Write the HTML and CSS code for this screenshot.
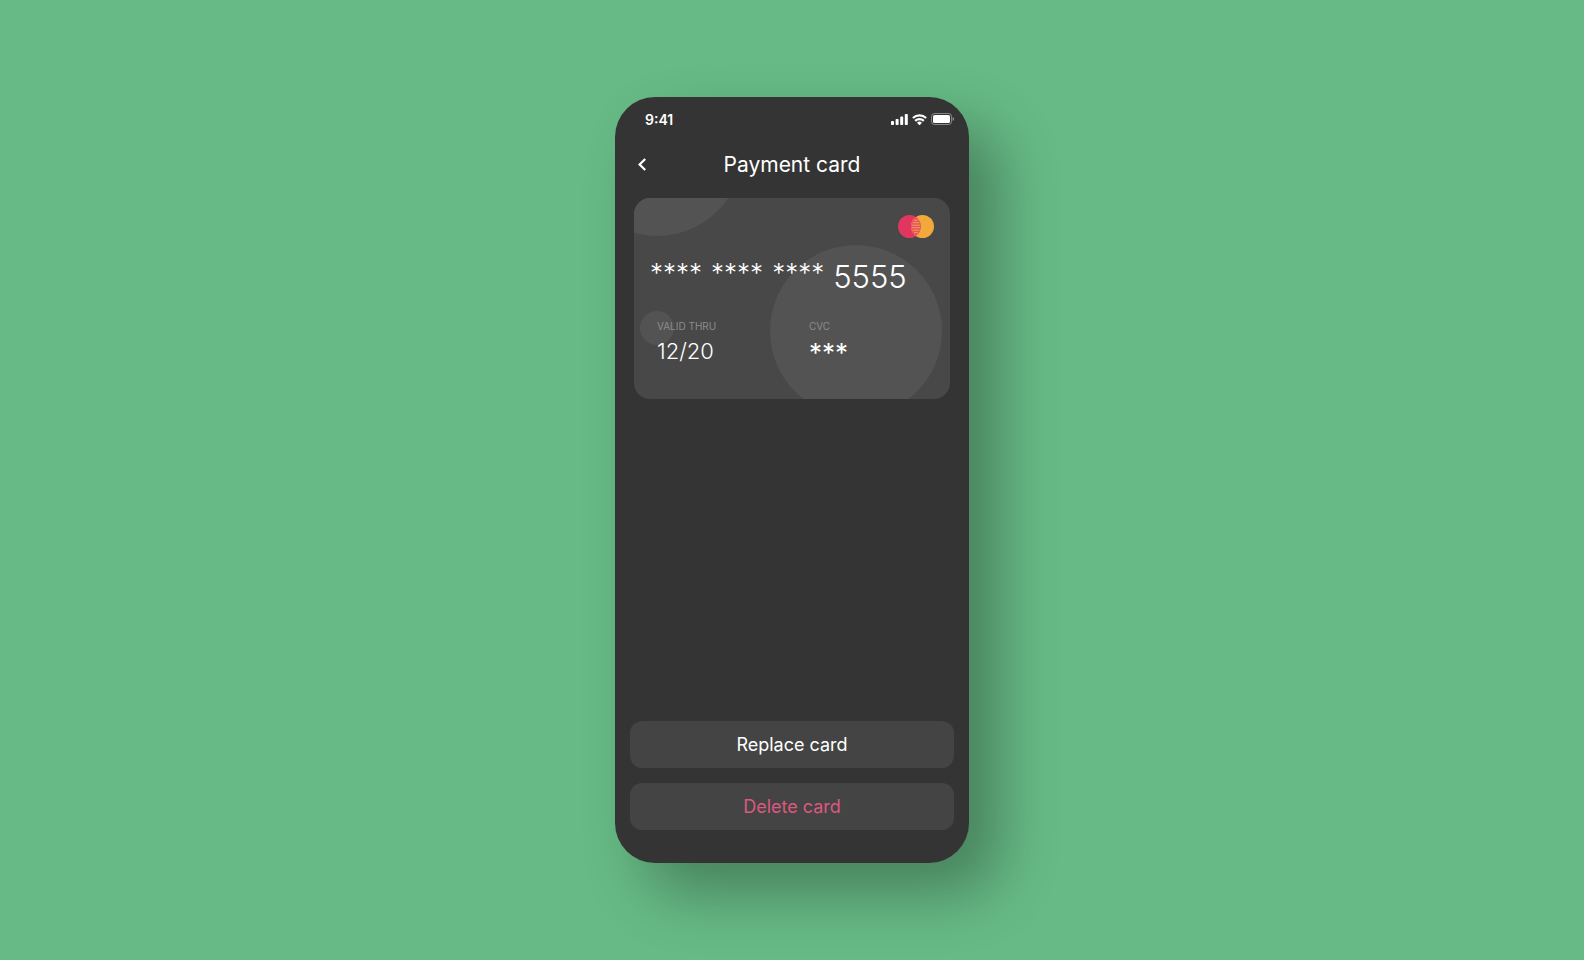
FILE: index.html
```html
<!DOCTYPE html>
<html lang="en">
<head>
    <meta charset="UTF-8">
    <meta name="viewport" content="width=device-width, initial-scale=1.0">
    <title>Payment card</title>
    <link rel="stylesheet" href="styles.css">
</head>
<body>
    <main class="phone">
        <div class="status-bar">
            <span class="time">9:41</span>
            <div class="status-icons">
                <svg width="17" height="11" viewBox="0 0 17 11" fill="#fff">
                    <rect x="0" y="7" width="3" height="4" rx="0.8"/>
                    <rect x="4.6" y="5" width="3" height="6" rx="0.8"/>
                    <rect x="9.2" y="2.6" width="3" height="8.4" rx="0.8"/>
                    <rect x="13.8" y="0" width="3" height="11" rx="0.8"/>
                </svg>
                <svg width="15" height="11" viewBox="0 0 15 11" fill="none" stroke="#fff" stroke-width="2.2">
                    <path d="M0.9 4A9.6 9.6 0 0 1 14.1 4"/>
                    <path d="M3.2 6.9A6.2 6.2 0 0 1 11.8 6.9"/>
                    <path d="M7.5 11.4L5 8.8A3.6 3.6 0 0 1 10 8.8Z" fill="#fff" stroke="none"/>
                </svg>
                <svg width="23" height="12" viewBox="0 0 23 12">
                    <rect x="0.5" y="0.5" width="20" height="11" rx="3" fill="none" stroke="#fff" stroke-opacity="0.4"/>
                    <rect x="2" y="2" width="17" height="8" rx="1.6" fill="#fff"/>
                    <path d="M21.6 4V8A2.1 2.1 0 0 0 21.6 4Z" fill="#fff" fill-opacity="0.45"/>
                </svg>
            </div>
        </div>

        <header class="header">
            <button class="back" aria-label="Back">
                <svg width="8" height="13" viewBox="0 0 8 13" fill="none" stroke="#fff" stroke-width="2.2">
                    <path d="M7.2 1L1.6 6.5L7.2 12"/>
                </svg>
            </button>
            <h1>Payment card</h1>
        </header>

        <section class="card">
            <svg class="card-circles" viewBox="0 0 316 201" preserveAspectRatio="none">
                <circle cx="23" cy="-48" r="86"/>
                <circle cx="222" cy="133" r="86"/>
                <circle cx="23" cy="130" r="17"/>
            </svg>
            <svg class="card-logo" width="36" height="23" viewBox="0 0 36 23">
                <circle cx="11.5" cy="11.5" r="11.5" fill="#e0365f"/>
                <circle cx="24.5" cy="11.5" r="11.5" fill="#f2a93b"/>
                <path d="M18 2A11.5 11.5 0 0 1 18 21A11.5 11.5 0 0 1 18 2Z" fill="#e8505a"/>
                <path d="M16 5.2H20M14.6 7.7H21.4M13.8 10.2H22.2M13.8 12.7H22.2M14.6 15.2H21.4M16 17.7H20" stroke="#f2a05a" stroke-width="1"/>
            </svg>
            <div class="card-number">
                <span class="stars">****</span>
                <span class="stars">****</span>
                <span class="stars">****</span>
                <span class="digits">5555</span>
            </div>
            <dl class="card-info">
                <div>
                    <dt>VALID THRU</dt>
                    <dd>12/20</dd>
                </div>
                <div>
                    <dt>CVC</dt>
                    <dd class="stars">***</dd>
                </div>
            </dl>
        </section>

        <div class="actions">
            <button class="btn">Replace card</button>
            <button class="btn btn-delete">Delete card</button>
        </div>
    </main>
</body>
</html>
```
FILE: styles.css
```css
* {
    box-sizing: border-box;
}
body {
    margin: 0;
    min-height: 100vh;
    display: flex;
    align-items: center;
    justify-content: center;
    background-color: #67ba85;
    font-family: Inter, sans-serif;
    color: #fff;
}
.phone {
    display: flex;
    flex-direction: column;
    width: 100%;
    max-width: 354px;
    min-height: 766px;
    padding: 12px 15px 33px;
    border-radius: 40px;
    background: #343434;
    box-shadow: 30px 30px 60px rgba(0, 0, 0, 0.3);
}
.status-bar {
    display: flex;
    align-items: center;
    justify-content: space-between;
    height: 20px;
    padding-left: 15px;
}
.time {
    font-size: 14px;
    font-weight: 600;
}
.status-icons {
    display: flex;
    align-items: center;
    gap: 4px;
}
.header {
    display: grid;
    grid-template-columns: 24px 1fr 24px;
    align-items: center;
    margin-top: 20px;
    height: 30px;
}
.header h1 {
    margin: 0;
    font-size: 21px;
    font-weight: 400;
    text-align: center;
}
.back {
    display: flex;
    padding: 4px 8px;
    border: none;
    background: none;
    cursor: pointer;
}
.card {
    position: relative;
    display: flex;
    flex-direction: column;
    height: 201px;
    margin: 19px 4px 0;
    padding: 17px 16px;
    border-radius: 16px;
    background: #484848;
    overflow: hidden;
}
.card-circles {
    position: absolute;
    inset: 0;
    width: 100%;
    height: 100%;
    fill: #535353;
}
.card-logo,
.card-number,
.card-info {
    position: relative;
}
.card-logo {
    align-self: flex-end;
}
.card-number {
    display: flex;
    gap: 9px;
    height: 38px;
    margin-top: 20px;
    font-weight: 300;
    line-height: 38px;
}
.card .stars {
    font-size: 26px;
}
.card-number .stars {
    line-height: 30px;
}
.digits {
    font-size: 31px;
}
.card-info {
    display: grid;
    grid-template-columns: 152px 1fr;
    margin: 22px 0 0;
    padding-left: 7px;
}
.card-info dt {
    font-size: 10px;
    line-height: 16px;
    color: #8c8c8c;
}
.card-info dd {
    margin: 0;
    font-size: 22px;
    font-weight: 300;
    line-height: 34px;
}
.card-info .stars {
    font-weight: 400;
    line-height: 38px;
}
.actions {
    display: flex;
    flex-direction: column;
    gap: 15px;
    margin-top: auto;
}
.btn {
    height: 47px;
    border: none;
    border-radius: 12px;
    background: #444;
    color: #fff;
    font-family: inherit;
    font-size: 18px;
    cursor: pointer;
}
.btn-delete {
    color: #dc5880;
}
```
